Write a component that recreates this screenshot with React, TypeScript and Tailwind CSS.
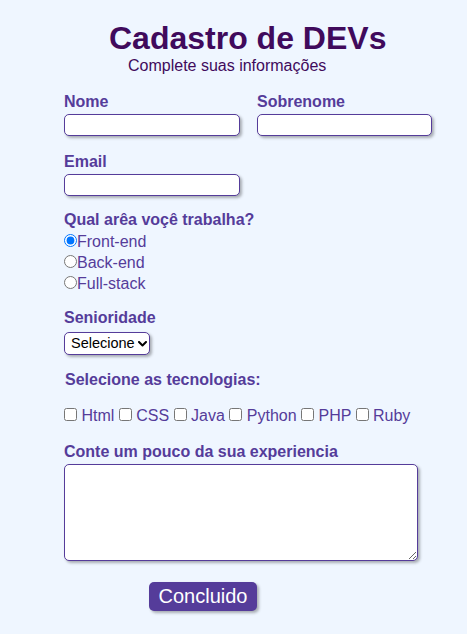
import { useState } from "react";

const labelCls = "block font-bold text-[16px] leading-[18px] text-[#553c9a]";
const inputCls =
    "block h-[22px] bg-white border border-[#553c9a] rounded-[5px] shadow-[2px_2px_3px_rgba(0,0,0,0.3)] px-1 outline-none";

const areas = ["Front-end", "Back-end", "Full-stack"];
const techs = ["Html", "CSS", "Java", "Python", "PHP", "Ruby"];

export default function App() {
    const [area, setArea] = useState<string>("Front-end");

    return (
        <div className="min-h-screen bg-[#eff6ff] font-['Liberation_Sans',Arial,sans-serif] text-[#553c9a]">
            <form className="pl-[64px] pt-[20px] pb-[22px]" onSubmit={(e) => e.preventDefault()}>
                <h1 className="ml-[45px] text-[32px] leading-[37px] font-bold text-[#400a5c]">Cadastro de DEVs</h1>
                <p className="ml-[64px] text-[16px] leading-[18px] text-[#400a5c]">Complete suas informações</p>

                <div className="flex gap-[17px] mt-[18px]">
                    <div>
                        <label className={labelCls}>Nome</label>
                        <input type="text" className={`${inputCls} w-[176px] mt-[3px]`} />
                    </div>
                    <div>
                        <label className={labelCls}>Sobrenome</label>
                        <input type="text" className={`${inputCls} w-[175px] mt-[3px]`} />
                    </div>
                </div>

                <div className="mt-[17px]">
                    <label className={labelCls}>Email</label>
                    <input type="email" className={`${inputCls} w-[176px] mt-[3px]`} />
                </div>

                <div className="mt-[15px]">
                    <label className={labelCls}>Qual arêa voçê trabalha?</label>
                    <div className="mt-[2px] text-[16px] leading-[21px]">
                        {areas.map((a) => (
                            <label key={a} className="block">
                                <input
                                    type="radio"
                                    name="area"
                                    checked={area === a}
                                    onChange={() => setArea(a)}
                                />
                                {a}
                            </label>
                        ))}
                    </div>
                </div>

                <div className="mt-[15px]">
                    <label className={labelCls}>Senioridade</label>
                    <div className="relative mt-[5px] w-[86px]">
                        <select className="block appearance-none h-[23px] w-[86px] text-[14.5px] leading-[21px] text-black bg-white border border-[#553c9a] rounded-[5px] shadow-[2px_2px_3px_rgba(0,0,0,0.3)] pl-[6px] pr-0 outline-none">
                            <option>Selecione</option>
                            <option>Júnior</option>
                            <option>Pleno</option>
                            <option>Sênior</option>
                        </select>
                        {/* seta do select */}
                        <svg
                            className="absolute left-[74px] top-[9px] pointer-events-none"
                            width="9"
                            height="6"
                            viewBox="0 0 9 6"
                            fill="none"
                        >
                            <path d="M1 1l3.5 3.5L8 1" stroke="#000" strokeWidth="2" strokeLinecap="round" strokeLinejoin="round" />
                        </svg>
                    </div>
                </div>

                <div className="mt-[16px]">
                    <label className={`${labelCls} ml-[1px]`}>Selecione as tecnologias:</label>
                    <div className="mt-[18px] text-[16px] leading-[18px]">
                        {techs.map((t) => (
                            <span key={t}>
                                <input type="checkbox" /> {t}{" "}
                            </span>
                        ))}
                    </div>
                </div>

                <div className="mt-[18px]">
                    <label className={labelCls}>Conte um pouco da sua experiencia</label>
                    <textarea className="block mt-[3px] w-[354px] h-[97px] bg-white border border-[#553c9a] rounded-[5px] shadow-[2px_2px_3px_rgba(0,0,0,0.3)] p-1 outline-none" />
                </div>

                <button
                    type="submit"
                    className="block mt-[21px] ml-[85px] h-[29px] w-[108px] bg-[#553c9a] text-white text-[20px] leading-[23px] rounded-[5px] shadow-[2px_2px_3px_rgba(0,0,0,0.3)]"
                >
                    Concluido
                </button>
            </form>
        </div>
    );
}
